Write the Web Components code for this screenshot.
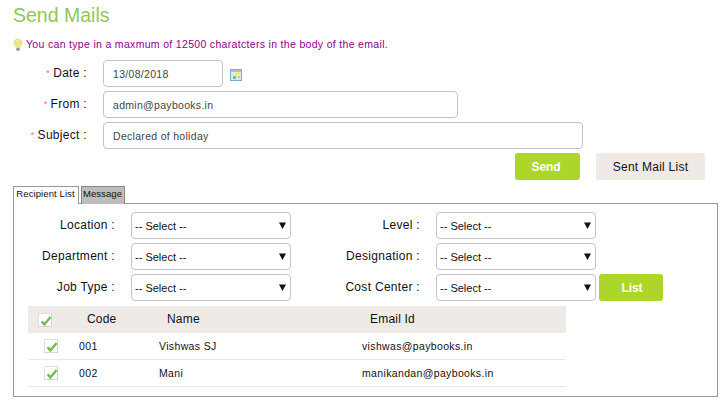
<!DOCTYPE html>
<html><head><meta charset="utf-8"><title>Send Mails</title>
<style>
html,body{margin:0;padding:0;background:#fff;font-family:"Liberation Sans",Arial,sans-serif;color:#222}
</style></head><body>
<mail-page></mail-page>
<script>
const def=(n,css,html)=>{customElements.define(n,class extends HTMLElement{
  constructor(){super();const s=this.attachShadow({mode:'open'});s.innerHTML=`<style>${css}</style>${html}`;}
});};
def('x-title',':host{display:block;padding:5px 0 0 13px;font-size:19.5px;line-height:21px;height:21px;color:#93c656}','<slot></slot>');
def('x-note',':host{display:flex;align-items:center;height:16px;margin-top:10px;padding-left:13px;font-size:10.5px;letter-spacing:.32px;color:#8f0087;white-space:nowrap}svg{width:10px;height:14px;margin:1px 3px 0 0;flex:none}',
`<svg viewBox="0 0 11 14"><path d="M5.5.5C2.8.5 1 2.4 1 4.6c0 1.7 1.1 2.6 1.8 3.8.4.7.5 1.4.6 2.1h4.2c.1-.7.2-1.4.6-2.1.7-1.2 1.8-2.1 1.8-3.8C10 2.4 8.2.5 5.5.5z" fill="#e8e88e" stroke="#d4d488" stroke-width=".6"/><path d="M3.6 3.2C4 2.2 5 1.8 6 1.8" stroke="#fffde0" stroke-width="1" fill="none"/><rect x="3.6" y="10.6" width="3.8" height="2.2" rx=".6" fill="#7f8478"/><rect x="4.5" y="12.8" width="2" height="1" fill="#a0a498"/></svg><slot></slot>`);
def('x-field',':host{display:grid;grid-template-columns:87px max-content max-content;column-gap:16px;align-items:center;height:27px;margin-top:4px;font-size:12px}.l{display:flex;justify-content:flex-end;align-items:center;color:#111;letter-spacing:.3px;padding-bottom:1px}i{color:#f2706a;font-style:normal;font-size:9px;margin-right:3px}::slotted([slot=after]){margin-left:-9px}',
`<div class="l"><i>*</i><slot name="label"></slot></div><slot name="input"></slot><slot name="after"></slot>`);
def('x-input',':host{display:flex;align-items:center;box-sizing:border-box;height:27px;padding:1px 0 0 9px;border:1px solid #c4c4c4;border-radius:4px;font-size:10.5px;letter-spacing:.3px;color:#444;background:#fff;width:var(--w)}','<slot></slot>');
def('x-cal',':host{display:block;width:12px;height:12px;margin-top:2px}svg{display:block}',
`<svg width="12" height="12" viewBox="0 0 12 12"><rect width="12" height="12" fill="#8aa6c8"/><rect x="1" y="1" width="10" height="10" fill="#dce8f0"/><rect x="1" y="1" width="10" height="2" fill="#a6c0da"/><rect x="6" y="3" width="3" height="3" fill="#f2e48a"/><rect x="3" y="7" width="3" height="3" fill="#6ecb5a"/><rect x="8" y="7" width="2" height="2" fill="#a8d8a0"/></svg>`);
def('x-actions',':host{display:flex;justify-content:flex-end;gap:16px;padding-right:23px;margin-top:4px;height:27px}','<slot></slot>');
def('x-btn',':host{display:flex;align-items:center;justify-content:center;height:27px;box-sizing:border-box;border-radius:3px;font-size:12px;width:var(--w);padding:var(--p,0);background:#add62a;color:#fff;font-weight:bold;letter-spacing:-.1px}:host([plain]){background:#efeae6;color:#111;font-weight:normal;letter-spacing:.25px}','<slot></slot>');
def('x-tabs',':host{display:flex;gap:2px;margin:6px 0 0 13px;height:17px;position:relative;z-index:1}','<slot></slot>');
def('x-tab',':host{display:flex;align-items:center;justify-content:center;box-sizing:border-box;height:18px;padding:0 1px 5px 0;width:var(--w);font-size:9.5px;color:#111;background:#bdbdbd;border:1px solid #888;border-bottom:0;letter-spacing:.1px}:host([active]){background:#fff;border-color:#999}','<slot></slot>');
def('x-panel',':host{display:block;box-sizing:border-box;margin-left:13px;width:705px;height:194px;border:1px solid #999;padding:8px 0 0 14px}','<slot></slot>');
def('x-filters',':host{display:grid;grid-template-columns:87px 160px 113px 160px 64px;grid-auto-rows:27px;row-gap:4px;column-gap:16px;align-items:center;font-size:12px}::slotted(.g){margin-left:-13px}','<slot></slot>');
def('x-lab',':host{display:block;text-align:right;letter-spacing:.3px;color:#111;padding-bottom:1px}','<slot></slot>');
def('x-select',':host{display:flex;align-items:center;box-sizing:border-box;height:27px;border:1px solid #c4c4c4;border-radius:4px;padding:0 0 0 3px;font-size:11px;color:#111;background:#fff;position:relative}svg{position:absolute;right:4px;top:9px}',
`<slot></slot><svg width="7" height="7" viewBox="0 0 7 7"><path d="M0 .5h7L3.5 7z" fill="#111"/></svg>`);
def('x-check',':host{display:block;width:14px;height:14px;box-sizing:border-box;background:#fff;border:1px solid #e4e0dc;border-right-color:#d8d4d0;border-bottom-color:#d8d4d0;position:relative}svg{position:absolute;left:1px;top:1px}',
`<svg width="12" height="12" viewBox="0 0 12 12"><path d="M1.6 6.4l2.8 3L10.6 2" fill="none" stroke="#6cbf4e" stroke-width="2.4"/></svg>`);
def('x-table',':host{display:block;width:538px;margin-top:5px;font-size:10.5px}','<slot></slot>');
def('x-row',':host{display:grid;grid-template-columns:51px 80px 203px 1fr;height:27px;align-items:center;box-sizing:border-box;border-bottom:1px solid #e8e8e8;color:#111;letter-spacing:.35px}:host([head]){background:#efeae6;border-bottom:0;font-size:12px;letter-spacing:.2px;grid-template-columns:59px 80px 203px 1fr}::slotted(.c){padding-left:16px}:host([head]) ::slotted(.c){padding-left:10px}:host([head]) ::slotted(span){padding-bottom:2px}','<slot></slot>');
const row=(a,b,c)=>`<x-row><div class="c"><x-check></x-check></div><span>${a}</span><span>${b}</span><span>${c}</span></x-row>`;
def('mail-page',':host{display:block;width:728px;height:407px;overflow:hidden}',`
<x-title>Send Mails</x-title>
<x-note>You can type in a maxmum of 12500 charatcters in the body of the email.</x-note>
<x-field style="margin-top:8px"><span slot="label">Date :</span><x-input slot="input" style="--w:120px">13/08/2018</x-input><x-cal slot="after"></x-cal></x-field>
<x-field><span slot="label">From :</span><x-input slot="input" style="--w:355px">admin@paybooks.in</x-input></x-field>
<x-field><span slot="label">Subject :</span><x-input slot="input" style="--w:480px">Declared of holiday</x-input></x-field>
<x-actions><x-btn style="--w:65px;--p:0 3px 0 0">Send</x-btn><x-btn plain style="--w:109px">Sent Mail List</x-btn></x-actions>
<x-tabs><x-tab active style="--w:66px">Recipient List</x-tab><x-tab style="--w:44px">Message</x-tab></x-tabs>
<x-panel>
<x-filters>
<x-lab>Location :</x-lab><x-select>-- Select --</x-select><x-lab>Level :</x-lab><x-select>-- Select --</x-select><span></span>
<x-lab>Department :</x-lab><x-select>-- Select --</x-select><x-lab>Designation :</x-lab><x-select>-- Select --</x-select><span></span>
<x-lab>Job Type :</x-lab><x-select>-- Select --</x-select><x-lab>Cost Center :</x-lab><x-select>-- Select --</x-select><x-btn class="g" style="--w:64px;--p:0 0 0 2px">List</x-btn>
</x-filters>
<x-table>
<x-row head><div class="c"><x-check></x-check></div><span>Code</span><span>Name</span><span>Email Id</span></x-row>
${row('001','Vishwas SJ','vishwas@paybooks.in')}${row('002','Mani','manikandan@paybooks.in')}
</x-table>
</x-panel>`);
</script>
</body></html>
